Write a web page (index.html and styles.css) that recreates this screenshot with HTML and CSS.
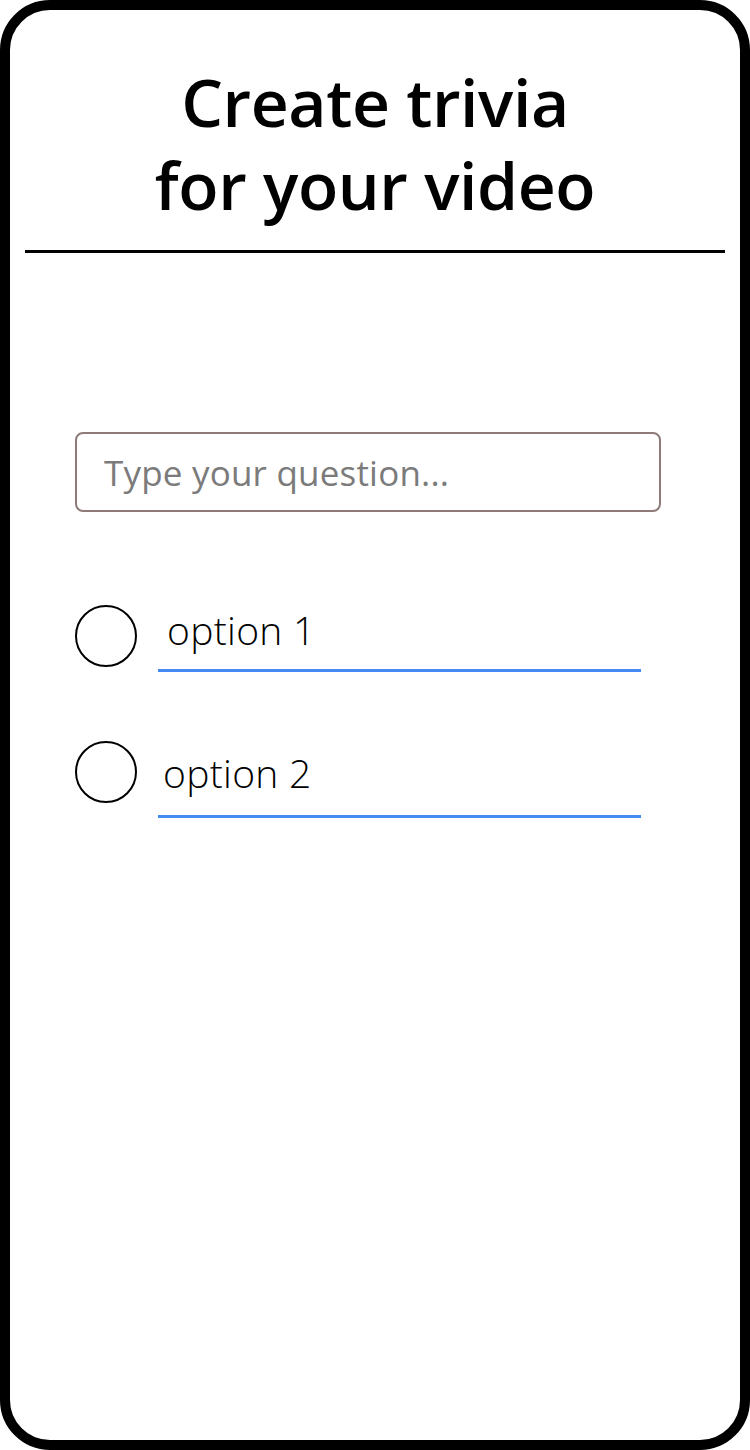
FILE: index.html
```html
<!DOCTYPE html>
<html>
<head>
<meta charset="utf-8">
<link rel="stylesheet" href="styles.css">
</head>
<body>
<div class="phone">
  <h1 class="title">Create trivia<br>for your video</h1>
  <div class="divider"></div>
  <div class="content">
    <div class="question">Type your question...</div>
    <div class="option opt1">
      <span class="radio"></span>
      <span class="field"><span class="label">option 1</span></span>
    </div>
    <div class="option opt2">
      <span class="radio"></span>
      <span class="field"><span class="label">option 2</span></span>
    </div>
  </div>
</div>
</body>
</html>
```
FILE: styles.css
```css
* { box-sizing: border-box; }
html, body { margin: 0; padding: 0; background: #fff; }
body { font-family: "Open Sans", "Noto Sans", sans-serif; }
.phone {
  width: 750px;
  height: 1450px;
  border: 10px solid #000;
  border-radius: 50px;
  display: flex;
  flex-direction: column;
}
.title {
  margin: 0;
  padding-top: 50px;
  font-size: 66px;
  font-weight: 600;
  line-height: 83px;
  text-align: center;
  color: #000;
  letter-spacing: -0.4px;
}
.divider {
  margin: 24px 15px 0 15px;
  height: 3px;
  background: #000;
}
.content {
  padding: 179px 79px 0 65px;
  display: flex;
  flex-direction: column;
}
.question {
  height: 80px;
  border: 2px solid #8f7a7a;
  border-radius: 8px;
  padding-left: 27px;
  font-size: 35px;
  font-weight: 400;
  color: #7b7b7b;
  line-height: 78px;
  letter-spacing: 0.2px;
}
.option {
  display: flex;
  align-items: flex-start;
}
.opt1 { margin-top: 93px; }
.opt2 { margin-top: 69px; }
.radio {
  width: 62px;
  height: 62px;
  border: 2px solid #000;
  border-radius: 50%;
  flex: none;
}
.field {
  margin-left: 21px;
  width: 483px;
  border-bottom: 3px solid #4589f2;
  display: block;
}
.opt1 .field { height: 67px; }
.opt2 .field { height: 77px; }
.label {
  display: block;
  font-size: 39px;
  font-weight: 300;
  color: #000;
  line-height: 50px;
  letter-spacing: 0.3px;
}
.opt1 .label { padding-left: 9px; }
.opt2 .label { padding-left: 5px; padding-top: 7px; }
```
